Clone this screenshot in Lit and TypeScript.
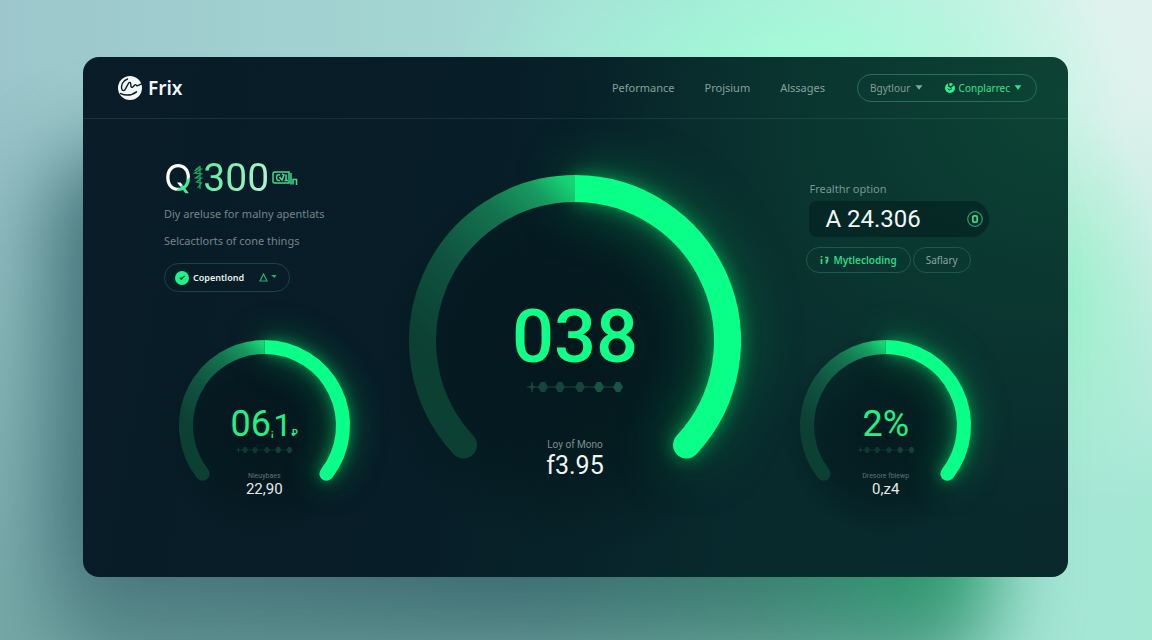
import { LitElement, html, svg, css } from "lit";
import { customElement, property } from "lit/decorators.js";

/** Point on a circle; the angle is measured in degrees clockwise from east. */
const polar = (c: number, r: number, deg: number) => {
  const a = (deg * Math.PI) / 180;
  return `${(c + r * Math.cos(a)).toFixed(2)} ${(c + r * Math.sin(a)).toFixed(2)}`;
};

@customElement("arc-gauge")
class ArcGauge extends LitElement {
  @property({ type: Boolean, reflect: true }) large = false;
  @property() value = "";
  @property() caption = "";
  @property() total = "";

  static styles = css`
    :host {
      display: grid;
      justify-items: center;
      font-family: Roboto, "Noto Sans", sans-serif;
    }
    .dial,
    .readout {
      grid-area: 1 / 1;
    }
    .dial {
      width: 100%;
      max-width: 171px;
      height: auto;
      overflow: visible;
      align-self: start;
    }
    .fill {
      fill: none;
    }
    .glow {
      filter: drop-shadow(0 0 7px rgba(0, 240, 110, 0.5)) drop-shadow(0 0 16px rgba(0, 190, 90, 0.5));
    }
    .readout {
      display: flex;
      flex-direction: column;
      align-items: center;
      padding-top: 64px;
      z-index: 1;
    }
    .value {
      color: #22f088;
      font-size: 36px;
      line-height: 40px;
      display: flex;
      align-items: baseline;
    }
    .dots {
      width: 58px;
      height: 10px;
      margin-top: 1px;
      opacity: 0.7;
    }
    .caption {
      margin-top: 16px;
      color: #5d7474;
      font-size: 7px;
      line-height: 10px;
    }
    .total {
      color: #e3ebea;
      font-size: 15px;
      line-height: 16px;
    }
    :host([large]) .dial {
      max-width: 332px;
    }
    :host([large]) .glow {
      filter: drop-shadow(0 0 9px rgba(0, 240, 110, 0.5)) drop-shadow(0 0 26px rgba(0, 190, 90, 0.5));
    }
    :host([large]) .readout {
      padding-top: 124px;
    }
    :host([large]) .value {
      color: #10ff88;
      font-size: 74px;
      font-weight: 500;
      line-height: 76px;
    }
    :host([large]) .dots {
      width: 98px;
      height: 14px;
      margin-top: 5px;
      opacity: 1;
    }
    :host([large]) .caption {
      margin-top: 43px;
      color: #7d9090;
      font-size: 10px;
      line-height: 16px;
    }
    :host([large]) .total {
      color: #f0f4f4;
      font-size: 25px;
      line-height: 26px;
    }
    ::slotted(*) {
      font-size: 9px;
      font-weight: 700;
      line-height: 10px;
    }
    ::slotted(b) {
      font-size: 32px;
      font-weight: 400;
      line-height: 32px;
    }
  `;

  render() {
    const size = this.large ? 332 : 171;
    const stroke = this.large ? 27 : 14;
    const sweep = this.large ? 43 : 38;
    const c = size / 2;
    const r = c - stroke / 2;
    const height = this.large ? 284 : 142;
    const top = `${c} ${c - r}`;
    const left = polar(c, r, 180 - sweep);
    const right = polar(c, r, sweep);
    const [lx, ly] = left.split(" ");
    const [rx, ry] = right.split(" ");
    return html`
      <svg class="dial" viewBox="0 0 ${size} ${height}" aria-hidden="true">
        <defs>
          <linearGradient id="fade" gradientUnits="userSpaceOnUse" x1=${c} y1=${c - r} x2=${c - r} y2=${c}>
            <stop offset="0" stop-color="#15d474" />
            <stop offset="0.14" stop-color="#179a60" />
            <stop offset="0.34" stop-color="#14734f" />
            <stop offset="0.65" stop-color="#0f5340" />
            <stop offset="1" stop-color="#0c4033" />
          </linearGradient>
          <radialGradient id="well">
            <stop offset="0" stop-color="#021419" stop-opacity="0.75" />
            <stop offset="0.6" stop-color="#02161a" stop-opacity="0.5" />
            <stop offset="1" stop-color="#02161a" stop-opacity="0" />
          </radialGradient>
        </defs>
        <circle cx=${c} cy=${c * 1.1} r=${c * 1.2} fill="url(#well)" />
        <g class="glow">
          <path class="fill" d="M${top} A${r} ${r} 0 0 1 ${right}" stroke="#0aff88" stroke-width=${stroke} />
          <circle cx=${rx} cy=${ry} r=${stroke / 2} fill="#0aff88" />
        </g>
        <path class="fill" d="M${top} A${r} ${r} 0 0 0 ${left}" stroke="url(#fade)" stroke-width=${stroke} />
        <circle cx=${lx} cy=${ly} r=${stroke / 2} fill="#0c4033" />
      </svg>
      <div class="readout">
        <div class="value">${this.value}<slot></slot></div>
        <svg class="dots" viewBox="0 0 98 14" aria-hidden="true">
          <path d="M1 7H97M6 2V12" stroke="#16483c" stroke-width="1.2" />
          <path d="M6 3L7.200 5.800L10 7L7.200 8.200L6 11L4.800 8.200L2 7L4.800 5.800Z" fill="#16483c" />
          ${[17, 34, 54, 73, 92].map(
            (x, i) => svg`<path d="M${x - 5} 7L${x - 2} 2H${x + 2}L${x + 5} 7L${x + 2} 12H${x - 2}Z" fill=${
              i > 2 ? "#175443" : "#13453a"
            } />`
          )}
        </svg>
        <div class="caption">${this.caption}</div>
        <div class="total">${this.total}</div>
      </div>
    `;
  }
}

@customElement("app-root")
class AppRoot extends LitElement {
  static styles = css`
    :host {
      display: grid;
      box-sizing: border-box;
      min-height: 100vh;
      padding: 57px 84px 63px 83px;
      overflow: hidden;
      font-family: "Noto Sans", sans-serif;
      background:
        radial-gradient(ellipse 340px 170px at 69% 12%, rgba(160, 255, 216, 0.95), rgba(165, 250, 216, 0) 100%),
        radial-gradient(ellipse 90px 200px at 93% 47%, rgba(145, 242, 198, 0.7), rgba(160, 240, 205, 0) 100%),
        radial-gradient(ellipse 460px 480px at 100% 4%, #e0f2ee 12%, rgba(224, 244, 238, 0) 100%),
        radial-gradient(ellipse 60% 90% at 0% 100%, rgba(112, 164, 162, 0.85), rgba(120, 170, 170, 0) 100%),
        linear-gradient(90deg, #9cc6cb 0%, #a6dcd6 50%, #a4e8d4 100%);
    }
    :host::before {
      content: "";
      grid-area: 1 / 1;
      margin: 90px 74px -110px -36px;
      border-radius: 80px;
      background:
        linear-gradient(rgba(110, 160, 156, 0) 74%, rgba(110, 162, 156, 0.6) 92%),
        linear-gradient(90deg, #45747a 0%, #33636a 50%, #2f7868 75%, #1e9d66 96%);
      filter: blur(40px);
    }
    .card {
      grid-area: 1 / 1;
      position: relative;
      display: flex;
      flex-direction: column;
      min-width: 0;
      border-radius: 16px;
      overflow: hidden;
      background:
        radial-gradient(ellipse 50% 80% at 100% 8%, rgba(13, 72, 53, 0.85), rgba(14, 70, 56, 0) 100%),
        linear-gradient(100deg, #091c27 0%, #071d27 38%, #082a2d 70%, #09292d 100%);
    }
    header {
      display: flex;
      align-items: center;
      height: 61px;
      padding: 0 31px 0 35px;
      border-bottom: 1px solid rgba(120, 190, 170, 0.14);
    }
    .brand {
      display: flex;
      align-items: center;
      gap: 6px;
      color: #f2f6f6;
      font-size: 19px;
      font-weight: 600;
      text-decoration: none;
    }
    .brand svg {
      width: 24px;
      height: 24px;
    }
    nav {
      display: flex;
      gap: 30px;
      margin-left: auto;
    }
    nav a {
      color: #87a09b;
      font-size: 11px;
      line-height: 16px;
      text-decoration: none;
    }
    button {
      display: flex;
      align-items: center;
      margin: 0;
      padding: 0;
      border: 0;
      background: none;
      color: inherit;
      font: inherit;
      cursor: pointer;
    }
    .switch {
      display: flex;
      align-items: center;
      justify-content: space-between;
      box-sizing: border-box;
      width: 180px;
      height: 28px;
      margin-left: 32px;
      padding: 0 14px 0 12px;
      border: 1px solid #217256;
      border-radius: 14px;
      color: #7f9f94;
      font-size: 10px;
    }
    .switch button {
      gap: 5px;
    }
    .switch .on {
      gap: 4px;
      color: #2ce38c;
    }
    .caret {
      width: 8px;
      height: 5px;
    }
    .mark {
      width: 10px;
      height: 10px;
    }
    main {
      flex: 1;
      display: grid;
      grid-template-columns: 50fr 83fr 50fr;
      gap: 44px;
      padding: 37px 82px 80px 81px;
    }
    .column {
      display: flex;
      flex-direction: column;
      justify-content: space-between;
      min-width: 0;
    }
    .center {
      justify-content: flex-start;
      padding-top: 19px;
    }
    h1 {
      display: flex;
      align-items: center;
      margin: 0;
      color: #fff;
      font-family: Roboto, sans-serif;
      font-size: 39px;
      font-weight: 400;
      line-height: 44px;
    }
    .letter,
    .amount {
      background: linear-gradient(135deg, #fff 64%, #45ea93 66%);
      background-clip: text;
      -webkit-background-clip: text;
      color: transparent;
    }
    .letter {
      font-family: Inter, sans-serif;
      font-size: 37px;
    }
    .amount {
      background-image: linear-gradient(100deg, #5fe89e, #b4f5d2);
    }
    .noise {
      width: 10px;
      height: 28px;
      margin-left: 1px;
    }
    .tag {
      width: 26px;
      height: 18px;
      margin-left: 3px;
    }
    p {
      margin: 0;
      color: #71868a;
      font-size: 11px;
      line-height: 27px;
      white-space: nowrap;
    }
    .pill {
      box-sizing: border-box;
      height: 29px;
      border: 1px solid #1b4440;
      border-radius: 15px;
    }
    .select {
      gap: 4px;
      width: 126px;
      margin-top: 9px;
      padding: 0 12px 0 10px;
      color: #e6efed;
      font-size: 9px;
      font-weight: 600;
    }
    .select .check {
      width: 14px;
      height: 14px;
    }
    .select .sort {
      width: 18px;
      height: 9px;
      margin-left: auto;
    }
    .panel {
      padding: 24px 0 0 24px;
    }
    label {
      display: block;
      color: #7b9590;
      font-size: 11px;
      line-height: 18px;
    }
    .field {
      display: flex;
      align-items: center;
      height: 36px;
      margin: 3px -3px 0 0;
      padding: 0 6px 0 16px;
      border-radius: 8px 18px 18px 8px;
      background: rgba(2, 30, 30, 0.6);
    }
    input {
      flex: 1;
      min-width: 0;
      padding: 0;
      border: 0;
      outline: 0;
      background: none;
      color: #f2f7f6;
      font-family: Roboto, sans-serif;
      font-size: 24px;
    }
    .field svg {
      width: 16px;
      height: 16px;
    }
    .chips {
      display: flex;
      gap: 2px;
      margin: 10px 0 0 -3px;
      color: #8ba59f;
      font-size: 10px;
    }
    .chips .pill {
      height: 26px;
      padding: 0 12px;
      border-color: #1e5a49;
      white-space: nowrap;
    }
    .chips .on {
      gap: 4px;
      padding: 0 13px;
      color: #2bd883;
      font-weight: 600;
    }
    .chips .bars {
      width: 9px;
      height: 8px;
    }
  `;

  private caret(color: string) {
    return html`<svg class="caret" viewBox="0 0 8 5" aria-hidden="true"><path d="M.5 .3H7.5L4 4.8Z" fill=${color} /></svg>`;
  }

  render() {
    return html`
      <div class="card">
        <header>
          <a class="brand" href="#">
            <svg viewBox="0 0 24 24" aria-hidden="true">
              <circle cx="12" cy="12" r="12" fill="#f4f7f7" />
              <path
                d="M9.500 3C5 4.600 3 8.800 3.700 12.600C4.100 15 6 15.400 7.200 13.300L10.600 7.200C11.400 5.900 12.600 6.200 12.700 7.600L13 10.400C13.100 11.600 14 11.700 14.800 10.900L16.800 8.900C17.300 8.400 17.900 8.500 18.300 9.100L19 10L23.700 7.900"
                fill="none"
                stroke="#0a1e29"
                stroke-width="1.4"
                stroke-linecap="round"
              />
              <path d="M2.500 17.600C7.500 19.600 14 19.400 18.400 15.800" fill="none" stroke="#0a1e29" stroke-width="1.5" stroke-linecap="round" />
            </svg>
            Frix
          </a>
          <nav>
            <a href="#">Peformance</a>
            <a href="#">Projsium</a>
            <a href="#">Alssages</a>
          </nav>
          <div class="switch">
            <button>Bgytlour ${this.caret("#6fb598")}</button>
            <button class="on">
              <svg class="mark" viewBox="0 0 10 10" aria-hidden="true">
                <circle cx="5" cy="5" r="5" fill="#2ff08f" />
                <path d="M3.800 0L3.600 3L5.800 4.200L8.800 1.400" fill="none" stroke="#0a3d31" stroke-width="1.500" />
                <path d="M2.600 5.600L4.600 7L6.800 5.600" fill="none" stroke="#0a3d31" stroke-width="1" />
              </svg>
              Conplarrec ${this.caret("#2ce38c")}
            </button>
          </div>
        </header>
        <main>
          <section class="column">
            <div>
              <h1>
                <span class="letter">Q</span>
                <svg class="noise" viewBox="0 0 9 28" aria-hidden="true">
                  <path
                    d="M7 2L3 5H8L1 9L8 10L2 14H8L3 18L8 19L4 24M6.500 2V25M1 7L4 5"
                    fill="none"
                    stroke="#1fa862"
                    stroke-width="1.200"
                  />
                </svg>
                <span class="amount">300</span>
                <svg class="tag" viewBox="0 0 26 18" aria-hidden="true">
                  <path
                    d="M8 3H2.5Q1 3 1 4.500V12.500Q1 14 2.500 14H17V3H8M8 6Q4.500 5 4.500 8.500T8 11.500M7.500 8L10 11L12 6L10 5M14 5.500V11.500M12.500 11.500H16M19 4V15.500M21 15.500V10.500H24.500V16"
                    fill="none"
                    stroke="#3ddc8c"
                    stroke-width="1.5"
                  />
                </svg>
              </h1>
              <p>Diy areluse for malny apentlats</p>
              <p>Selcactlorts of cone things</p>
              <button class="pill select">
                <svg class="check" viewBox="0 0 14 14" aria-hidden="true">
                  <circle cx="7" cy="7" r="7" fill="#1cf58b" />
                  <path d="M4.800 7.200L6.400 8.800L9.800 5L6.500 6.800Z" fill="#08432f" stroke="#08432f" stroke-width="0.8" />
                </svg>
                Copentlond
                <svg class="sort" viewBox="0 0 18 9" aria-hidden="true">
                  <path d="M4.500 1L8 8H1Z" fill="none" stroke="#23b26e" stroke-width="1.200" />
                  <path d="M12 2H17.500L15.500 5Z" fill="#23b26e" />
                </svg>
              </button>
            </div>
            <arc-gauge value="06" caption="Nieuybaes" total="22,90"><small>¡</small><b>1</b><small>₽</small></arc-gauge>
          </section>
          <section class="column center">
            <arc-gauge large value="038" caption="Loy of Mono" total="f3.95"></arc-gauge>
          </section>
          <section class="column">
            <div class="panel">
              <label for="option">Frealthr option</label>
              <div class="field">
                <input id="option" value="A 24.306" />
                <button aria-label="Currency">
                  <svg viewBox="0 0 16 16" aria-hidden="true">
                    <circle cx="8" cy="8" r="7.300" fill="none" stroke="#1fa367" stroke-width="1.200" />
                    <rect x="5.800" y="4.800" width="4.400" height="6.400" rx="1.500" fill="none" stroke="#35d98b" stroke-width="1.800" />
                  </svg>
                </button>
              </div>
              <div class="chips">
                <button class="pill on">
                  <svg class="bars" viewBox="0 0 9 8" aria-hidden="true">
                    <path d="M1.500 0V1.500M1.500 3V8M5 1.500H7.500V4.500H5.500M7.500 4.500L6 7.500" fill="none" stroke="#2bd883" stroke-width="1.700" />
                  </svg>
                  Mytlecloding
                </button>
                <button class="pill">Saflary</button>
              </div>
            </div>
            <arc-gauge value="2%" caption="Dresore fblewp" total="0,z4"></arc-gauge>
          </section>
        </main>
      </div>
    `;
  }
}
